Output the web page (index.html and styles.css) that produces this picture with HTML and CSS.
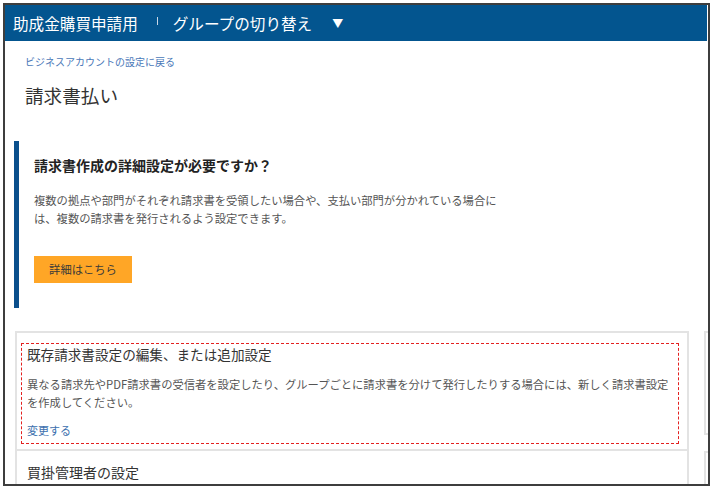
FILE: index.html
```html
<!DOCTYPE html>
<html lang="ja">
<head>
<meta charset="utf-8">
<title>請求書払い</title>
<link rel="stylesheet" href="styles.css">
</head>
<body>
<div class="frame">
  <header class="topbar">
    <span class="brand">助成金購買申請用</span>
    <span class="sep"></span>
    <span class="switch">グループの切り替え</span>
    <span class="caret">▼</span>
  </header>
  <main class="content">
    <a class="back" href="#">ビジネスアカウントの設定に戻る</a>
    <h1 class="page-title">請求書払い</h1>
    <section class="callout">
      <h2 class="callout-title">請求書作成の詳細設定が必要ですか？</h2>
      <p class="callout-text">複数の拠点や部門がそれぞれ請求書を受領したい場合や、支払い部門が分かれている場合に<br>は、複数の請求書を発行されるよう設定できます。</p>
      <a class="btn" href="#">詳細はこちら</a>
    </section>
    <div class="cards">
      <div class="card">
        <div class="card-row first">
          <div class="focus-box">
            <div class="row-title">既存請求書設定の編集、または追加設定</div>
            <p class="row-text">異なる請求先やPDF請求書の受信者を設定したり、グループごとに請求書を分けて発行したりする場合には、新しく請求書設定<br>を作成してください。</p>
            <a class="row-link" href="#">変更する</a>
          </div>
        </div>
        <div class="card-row second">
          <div class="row-title">買掛管理者の設定</div>
        </div>
      </div>
      <div class="side">
        <div class="side-card top"></div>
        <div class="side-card bottom"></div>
      </div>
    </div>
  </main>
</div>
</body>
</html>
```
FILE: styles.css
```css
* { box-sizing: border-box; }
html, body { margin: 0; padding: 0; background: #ffffff; }
body { font-family: "Noto Sans CJK JP", "Noto Sans", sans-serif; color: #333; }

.frame {
  margin: 3px 0 0 3px;
  width: 707px;
  height: 483px;
  border: 2px solid #3e3e3e;
  overflow: hidden;
  background: #fff;
}

.topbar {
  height: 36px;
  width: 702px;
  background: #03558f;
  color: #fff;
  display: flex;
  align-items: center;
  padding-left: 8px;
  font-size: 15.6px;
  line-height: 20px;
}
.sep {
  width: 1px;
  height: 8px;
  background: #c8d6e6;
  margin: 0 15px 0 19px;
  align-self: flex-start;
  margin-top: 12px;
}
.caret { font-size: 11px; margin-left: 20px; }

.content { padding-left: 9px; }

.back {
  display: block;
  margin: 14px 0 0 11px;
  font-size: 10px;
  line-height: 14px;
  color: #4a78b8;
  text-decoration: none;
}
.page-title {
  margin: 13px 0 0 11px;
  font-size: 18.6px;
  line-height: 26px;
  font-weight: normal;
  color: #333;
}

.callout {
  margin-top: 33px;
  border-left: 5px solid #0a4f8c;
  padding: 14px 0 25px 15px;
}
.callout-title {
  margin: 0;
  font-size: 14px;
  line-height: 20px;
  font-weight: bold;
  color: #222;
}
.callout-text {
  margin: 16px 0 0;
  font-size: 11.3px;
  line-height: 18px;
  color: #555;
  white-space: nowrap;
}
.btn {
  display: inline-block;
  margin-top: 29px;
  width: 98px;
  height: 27px;
  line-height: 27px;
  text-align: center;
  background: #ffa626;
  color: #3a3a3a;
  font-size: 11.3px;
  text-decoration: none;
}

.cards {
  margin: 23px 0 0 1px;
  display: grid;
  grid-template-columns: 674px 100px;
  column-gap: 15px;
}
.card {
  border: 2px solid #e3e3e3;
  border-bottom: none;
}
.card-row.first {
  padding: 10px 8px 5px 4px;
  border-bottom: 2px solid #e3e3e3;
}
.card-row.second { padding: 11px 10px 0; }
.focus-box {
  border: 1px dashed #e3201f;
  padding: 1px 6px 4px 5px;
}
.row-title {
  font-size: 13.6px;
  line-height: 18px;
  color: #333;
}
.card-row.second .row-title { font-size: 14px; line-height: 20px; }
.row-text {
  margin: 12px 0 0;
  font-size: 11.3px;
  line-height: 18px;
  color: #555;
  white-space: nowrap;
}
.row-link {
  display: block;
  margin-top: 10px;
  font-size: 11px;
  line-height: 18px;
  color: #3c6fae;
  text-decoration: none;
}

.side { display: flex; flex-direction: column; gap: 16px; }
.side-card { border: 2px solid #e3e3e3; }
.side-card.top { height: 104px; }
.side-card.bottom { height: 60px; }
```
